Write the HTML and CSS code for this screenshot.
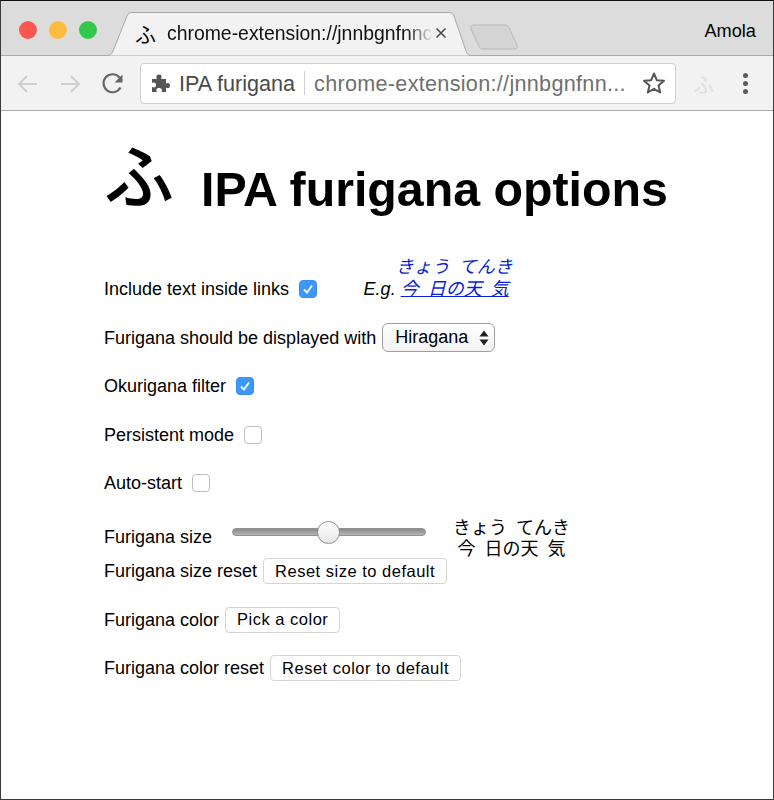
FILE: index.html
```html
<!DOCTYPE html>
<html lang="en">
<head>
<meta charset="utf-8">
<title>IPA furigana options</title>
<link rel="stylesheet" href="styles.css">
</head>
<body>
<div class="window">
  <header class="titlebar">
    <div class="lights">
      <span class="light red"></span><span class="light yellow"></span><span class="light green"></span>
    </div>
    <div class="tab">
      <svg class="tab-shape" width="364" height="44" viewBox="0 0 364 44"><path d="M-3 43.500C0 43.500 2 42 3 39L17 4C18 1.500 19.500 .5 22 .5H339C341.500 .5 343 1.500 344 4L356 39C357 42 358.500 43.500 361 43.500H364" fill="#f2f2f2" stroke="#a9a9a9"/></svg>
      <span class="tab-icon">ふ</span>
      <span class="tab-title">chrome-extension://jnnbgnfnnc</span>
      <svg class="tab-close" width="12" height="12" viewBox="0 0 12 12"><path d="M1.500 1.500L10.500 10.500M10.500 1.500L1.500 10.500" stroke="#444" stroke-width="1.500"/></svg>
    </div>
    <svg class="newtab" width="50" height="26" viewBox="0 0 50 26"><path d="M5 1H36C38 1 39 2 40 3.500L48 21C49 23.500 48 25 45 25H14C12 25 11 24 10 22.500L2 5C1 2.500 2 1 5 1Z" fill="#d4d4d4" stroke="#b9b9b9"/></svg>
    <span class="profile">Amola</span>
  </header>
  <nav class="toolbar">
    <svg class="nav" width="22" height="20" viewBox="0 0 22 20"><path d="M20 10H2M10 2L2 10L10 18" fill="none" stroke="#cfcfcf" stroke-width="2"/></svg>
    <svg class="nav" width="22" height="20" viewBox="0 0 22 20"><path d="M2 10H20M12 2L20 10L12 18" fill="none" stroke="#cfcfcf" stroke-width="2"/></svg>
    <svg class="nav" width="24" height="22" viewBox="0 0 24 22"><path d="M19.500 14.500A9 9 0 1 1 18.500 4.500" fill="none" stroke="#666" stroke-width="2.200"/><path d="M21.500 1.500V9.500H13.500Z" fill="#666"/></svg>
    <div class="omnibox">
      <svg class="puzzle" width="20" height="20" viewBox="0 0 20 20"><path d="M1 6H6C5 4.500 5 1.500 8 1.500C11 1.500 11 4.500 10 6H15V10.500C16.500 9.500 19 9.500 19 12.500C19 15.500 16.500 15.500 15 14.500V19H10.500C11.500 17.500 11 15 8 15C5 15 5 17.500 6 19H1V14C3 15 5 14.500 5 12C5 9.500 3 9 1 10Z" fill="#555"/></svg>
      <span class="ext-name">IPA furigana</span>
      <span class="sep"></span>
      <span class="url">chrome-extension://jnnbgnfnn...</span>
      <svg class="star" width="24" height="24" viewBox="0 0 24 24"><path d="M12 2.500L14.800 9.200L22 9.800L16.500 14.500L18.200 21.500L12 17.800L5.800 21.500L7.500 14.500L2 9.800L9.200 9.200Z" fill="none" stroke="#555" stroke-width="2" stroke-linejoin="round"/></svg>
    </div>
    <span class="ext-icon">ふ</span>
    <span class="menu"><i></i><i></i><i></i></span>
  </nav>
  <main class="page">
    <h1 class="heading"><span class="logo">ふ</span><span class="heading-text">IPA furigana options</span></h1>

    <div class="row">
      <label class="opt">Include text inside links</label>
      <span class="check on"><svg width="12" height="12" viewBox="0 0 12 12"><path d="M2 6.500L5 9.500L10 2.500" fill="none" stroke="#fff" stroke-width="1.800"/></svg></span>
      <span class="example"><em>E.g.</em> <a class="eg-link" href="#"><span class="furi">きょう てんき</span>今 日の天 気</a></span>
    </div>
    <div class="row">
      <label class="opt">Furigana should be displayed with</label>
      <span class="select">Hiragana<svg width="10" height="18" viewBox="0 0 10 18"><path d="M5 1.500L9.500 7.500H.5ZM5 16.500L.5 10.500H9.500Z" fill="#222"/></svg></span>
    </div>
    <div class="row">
      <label class="opt">Okurigana filter</label>
      <span class="check on"><svg width="12" height="12" viewBox="0 0 12 12"><path d="M2 6.500L5 9.500L10 2.500" fill="none" stroke="#fff" stroke-width="1.800"/></svg></span>
    </div>
    <div class="row">
      <label class="opt">Persistent mode</label>
      <span class="check"></span>
    </div>
    <div class="row">
      <label class="opt">Auto-start</label>
      <span class="check"></span>
    </div>
    <div class="row row-size">
      <label class="opt">Furigana size</label>
      <span class="slider"><span class="track"></span><span class="thumb"></span></span>
      <span class="sample"><span>きょう てんき</span><span>今 日の天 気</span></span>
    </div>
    <div class="row">
      <label class="opt">Furigana size reset</label>
      <span class="btn">Reset size to default</span>
    </div>
    <div class="row">
      <label class="opt">Furigana color</label>
      <span class="btn">Pick a color</span>
    </div>
    <div class="row">
      <label class="opt">Furigana color reset</label>
      <span class="btn">Reset color to default</span>
    </div>
  </main>
</div>
</body>
</html>
```
FILE: styles.css
```css
* { box-sizing: border-box; }
html, body { margin: 0; padding: 0; }
body { width: 774px; height: 800px; overflow: hidden; background: #fff; font-family: "Liberation Sans", Arial, "Noto Sans CJK JP", sans-serif; color: #000; }
.window { width: 774px; height: 800px; border: 1px solid #3a3a3a; border-top-color: #111; display: flex; flex-direction: column; overflow: hidden; }

.titlebar { height: 55px; flex: none; background: #dcdcdc; display: flex; align-items: flex-end; border-bottom: 1px solid #a9a9a9; }
.lights { display: flex; gap: 12px; padding: 0 0 12px 18px; width: 107px; flex: none; align-self: flex-end; margin-bottom: 4px; }
.light { width: 18px; height: 18px; border-radius: 50%; flex: none; }
.red { background: #fc5753; }
.yellow { background: #fdbc40; }
.green { background: #34c84a; }

.tab { position: relative; width: 364px; height: 44px; flex: none; margin: 0 0 -1px 2px; display: flex; align-items: center; padding: 0 0 2px 25px; }
.tab-shape { position: absolute; left: 0; top: 0; overflow: visible; }
.tab-icon { position: relative; width: 24px; font-size: 21px; font-family: "Noto Sans CJK JP", sans-serif; line-height: 1; flex: none; }
.tab-title { position: relative; font-size: 19.400px; width: 266px; margin-left: 8px; white-space: nowrap; overflow: hidden; color: #111; flex: none; -webkit-mask-image: linear-gradient(to right, #000 90%, transparent); mask-image: linear-gradient(to right, #000 90%, transparent); }
.tab-close { position: relative; flex: none; margin-left: 2px; }
.newtab { flex: none; margin: 0 0 5px -5px; }
.profile { margin-left: auto; font-size: 18.200px; align-self: flex-start; padding: 21px 17px 0 0; line-height: 18px; }

.toolbar { height: 55px; flex: none; background: #f2f2f2; border-bottom: 1px solid #a9a9a9; display: flex; align-items: center; padding-left: 16px; }
.nav { flex: none; margin: 1px 20px 0 0; }
.nav:nth-child(3) { margin-right: 15px; }
.omnibox { width: 536px; height: 41px; background: #fff; border: 1px solid #cfcfcf; border-radius: 4px; display: flex; align-items: center; padding-left: 10px; flex: none; }
.puzzle { flex: none; }
.ext-name { font-size: 21.600px; color: #4a4a4a; margin-left: 8px; padding-top: 2px; white-space: nowrap; }
.sep { width: 1px; height: 24px; background: #cfcfcf; margin: 0 9px; flex: none; }
.url { font-size: 21.600px; letter-spacing: .3px; color: #6f6f6f; padding-top: 2px; white-space: nowrap; }
.star { margin-left: auto; margin-right: 9px; flex: none; }
.ext-icon { font-family: "Noto Sans CJK JP", sans-serif; font-size: 21px; color: #dedede; margin-left: 17px; width: 24px; flex: none; line-height: 1; }
.menu { display: flex; flex-direction: column; gap: 3px; margin-left: 26px; }
.menu i { width: 5px; height: 5px; border-radius: 50%; background: #5a5a5a; }

.page { padding: 0 0 0 103px; flex: 1; }
.heading { margin: 0; padding: 26px 0 0 0; height: 154px; display: flex; align-items: flex-start; font-size: 48.300px; font-weight: 700; line-height: 56px; white-space: nowrap; }
.logo { font-family: "Noto Sans CJK JP", sans-serif; font-size: 70px; font-weight: 500; line-height: 72px; width: 97px; flex: none; }
.heading-text { padding-top: 24px; }

.row { height: 48.500px; display: flex; align-items: center; font-size: 18px; }
.opt { white-space: nowrap; line-height: 20px; }
.check { width: 18px; height: 18px; margin-left: 9.500px; border: 1px solid #bdbdbd; border-radius: 4px; background: #fff; display: flex; align-items: center; justify-content: center; flex: none; }
.check.on { background: #3b99fc; border-color: #3b8ee8; }
.example { margin-left: 47px; white-space: nowrap; line-height: 20px; }
.eg-link { position: relative; display: inline-block; color: #0b1fd6; font-style: italic; word-spacing: 4px; }
.furi { position: absolute; left: -5px; top: -22px; }

.select { margin-left: 6px; width: 113px; height: 29px; border: 1px solid #9e9e9e; border-radius: 6px; background: linear-gradient(#fff, #f2f2f2); display: flex; align-items: center; justify-content: space-between; padding: 0 5px 0 12px; }

.row-size { height: 39.500px; align-items: flex-start; padding-top: 19px; }
.slider { position: relative; width: 194px; height: 24px; margin-left: 20px; flex: none; display: flex; align-items: center; margin-top: -7px; }
.track { width: 100%; height: 8px; border-radius: 4px; background: linear-gradient(#8a8a8a, #b5b5b5); border: 1px solid #929292; }
.thumb { position: absolute; left: 85px; top: 1px; width: 23px; height: 23px; border-radius: 50%; background: linear-gradient(#fff, #e6e6e6); border: 1px solid #8f8f8f; }
.sample { display: flex; flex-direction: column; align-items: center; margin-left: 27px; margin-top: -9px; line-height: 21px; white-space: nowrap; word-spacing: 4px; }

.btn { margin-left: 6px; height: 26px; display: flex; align-items: center; padding: 0 11px; border: 1px solid #d4d4d4; border-radius: 4px; background: #fff; font-size: 16.500px; letter-spacing: .5px; white-space: nowrap; }
```
